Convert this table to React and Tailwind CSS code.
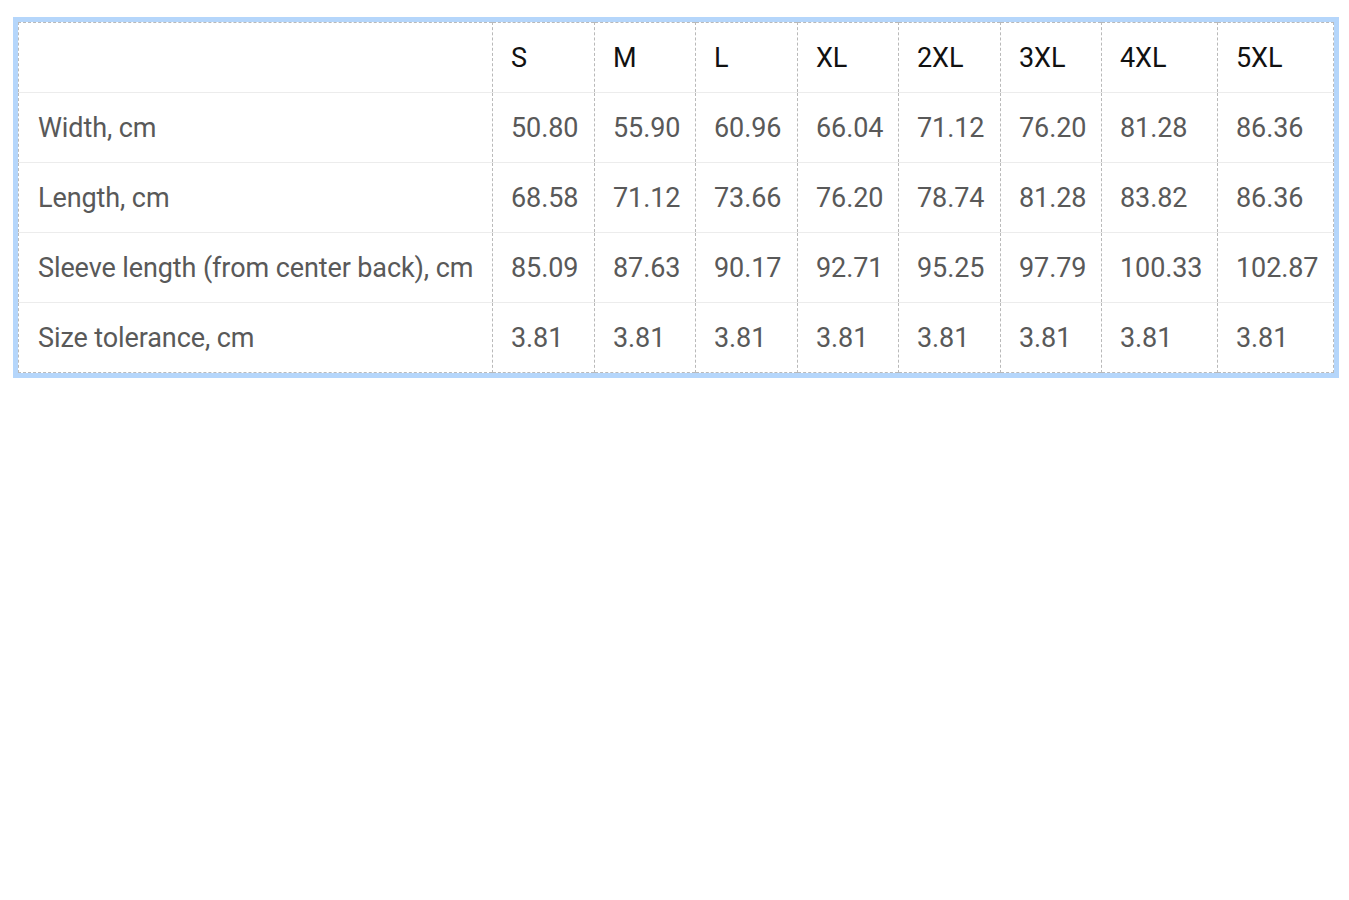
const sizes = ["S", "M", "L", "XL", "2XL", "3XL", "4XL", "5XL"];

const rows = [
  { label: "Width, cm", values: ["50.80", "55.90", "60.96", "66.04", "71.12", "76.20", "81.28", "86.36"] },
  { label: "Length, cm", values: ["68.58", "71.12", "73.66", "76.20", "78.74", "81.28", "83.82", "86.36"] },
  { label: "Sleeve length (from center back), cm", values: ["85.09", "87.63", "90.17", "92.71", "95.25", "97.79", "100.33", "102.87"] },
  { label: "Size tolerance, cm", values: ["3.81", "3.81", "3.81", "3.81", "3.81", "3.81", "3.81", "3.81"] },
];

const widths = ["w-[474px]", "w-[102px]", "w-[101px]", "w-[102px]", "w-[101px]", "w-[102px]", "w-[101px]", "w-[116px]", "w-[116px]"];

export default function App() {
  return (
    <div className="min-h-screen bg-white pt-[17px] pl-[13px] pr-[10px]" style={{ fontFamily: "Roboto, 'Noto Sans', sans-serif" }}>
      <div className="border-[5px] border-[#b5d6fb]">
        <table className="w-full table-fixed border-collapse border border-dashed border-[#b9b9b9] text-[27px] tracking-[-0.1px]">
          <colgroup>
            {widths.map((w, i) => (
              <col key={i} className={w} />
            ))}
          </colgroup>
          <thead>
            <tr className="h-[70px]">
              <th className="px-[19px] pt-[1px]" />
              {sizes.map((s) => (
                <th key={s} className="border-l border-dashed border-[#b9b9b9] px-[18px] pt-[1px] text-left font-normal text-[#111]">
                  {s}
                </th>
              ))}
            </tr>
          </thead>
          <tbody>
            {rows.map((r) => (
              <tr key={r.label} className="h-[70px] border-t border-solid border-[#ececec]">
                <td className="px-[19px] pt-[1px] text-[#595959] whitespace-nowrap">{r.label}</td>
                {r.values.map((v, i) => (
                  <td key={i} className="border-l border-dashed border-[#b9b9b9] px-[18px] pt-[1px] text-[#595959] whitespace-nowrap">
                    {v}
                  </td>
                ))}
              </tr>
            ))}
          </tbody>
        </table>
      </div>
    </div>
  );
}
